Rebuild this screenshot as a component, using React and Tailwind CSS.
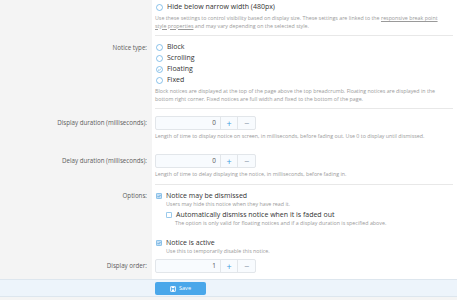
import React from "react";

const font = { fontFamily: '"Open Sans", "Noto Sans", sans-serif' };

function Radio({ checked }) {
  return (
    <svg width="7" height="7" viewBox="0 0 7 7" className="shrink-0">
      <circle cx="3.5" cy="3.5" r="3" fill="white" stroke="#5aa9e0" strokeWidth="0.7" />
      {checked && (
        <path d="M2 3.6 L3.1 4.6 L5 2.6" fill="none" stroke="#5aa9e0" strokeWidth="0.7" />
      )}
    </svg>
  );
}

function Check({ checked }) {
  return (
    <svg width="6" height="6" viewBox="0 0 6 6" className="shrink-0">
      <rect x="0.4" y="0.4" width="5.2" height="5.2" rx="0.8" fill={checked ? "#c6e0f5" : "white"} stroke="#5aa9e0" strokeWidth="0.7" />
      {checked && (
        <path d="M1.6 3.1 L2.6 4.1 L4.5 2" fill="none" stroke="#4a9bd6" strokeWidth="0.8" />
      )}
    </svg>
  );
}

function Label({ children }) {
  return (
    <div className="w-[152px] shrink-0 bg-[#f4f4f4] pr-[5px] text-right text-[6.2px] text-[#5c5c5c]">
      {children}
    </div>
  );
}

function NumberBox({ value }) {
  return (
    <div className="flex h-[14px] w-[101px] rounded-[2px] border border-[#e2e6ea] bg-[#f8fbfe]">
      <div className="flex flex-1 items-center justify-end pr-[4px] text-[6.4px] text-[#555]">{value}</div>
      <div className="flex w-[17px] items-center justify-center border-l border-[#e2e6ea] text-[9px] leading-none text-[#3d9de0]">+</div>
      <div className="flex w-[18px] items-center justify-center border-l border-[#e2e6ea] text-[9px] leading-none text-[#8c9bab]">−</div>
    </div>
  );
}

function Hint({ children, className = "" }) {
  return <div className={"text-[5.3px] leading-[7.5px] text-[#9a9a9a] " + className}>{children}</div>;
}

export default function App() {
  return (
    <div className="h-[300px] w-[457px] overflow-hidden bg-white" style={font}>
      {/* Row 1 */}
      <div className="flex">
        <Label />
        <div className="flex-1 pl-[3px] pr-[4px]">
          <div className="pt-[2px]">
            <div className="flex h-[11px] items-center gap-[4px] pl-[1px] text-[7px] text-[#333]">
              <Radio />
              <span>Hide below narrow width (480px)</span>
            </div>
            <Hint className="mt-[2px]">
              Use these settings to control visibility based on display size. These settings are linked to the{" "}
              <span className="underline">responsive break point</span>
              <br />
              <span className="underline">style properties</span> and may vary depending on the selected style.
            </Hint>
          </div>
          <div className="mt-[5px] h-px bg-[#e8e8e8]" />
        </div>
      </div>

      {/* Row 2 */}
      <div className="flex">
        <Label>
          <div className="pt-[6px] leading-[11px]">Notice type:</div>
        </Label>
        <div className="flex-1 pl-[3px] pr-[4px]">
          <div className="pt-[6px]">
            {["Block", "Scrolling", "Floating", "Fixed"].map((t) => (
              <div key={t} className="flex h-[11px] items-center gap-[4px] pl-[1px] text-[7px] text-[#333]">
                <Radio checked={t === "Floating"} />
                <span>{t}</span>
              </div>
            ))}
            <Hint className="mt-[1px] leading-[8px]">
              Block notices are displayed at the top of the page above the top breadcrumb. Floating notices are displayed in the
              <br />
              bottom right corner. Fixed notices are full width and fixed to the bottom of the page.
            </Hint>
          </div>
          <div className="mt-[5px] h-px bg-[#e8e8e8]" />
        </div>
      </div>

      {/* Row 3 */}
      <div className="flex">
        <Label>
          <div className="pt-[7px] leading-[14px]">Display duration (milliseconds):</div>
        </Label>
        <div className="flex-1 pb-[7px] pl-[3px] pr-[4px] pt-[7px]">
          <NumberBox value="0" />
          <Hint className="mt-[3px] leading-[7px]">
            Length of time to display notice on screen, in milliseconds, before fading out. Use 0 to display until dismissed.
          </Hint>
        </div>
      </div>

      {/* Row 4 */}
      <div className="flex">
        <Label>
          <div className="pt-[7px] leading-[14px]">Delay duration (milliseconds):</div>
        </Label>
        <div className="flex-1 pl-[3px] pr-[4px] pt-[7px]">
          <NumberBox value="0" />
          <Hint className="mt-[3px] leading-[7px]">
            Length of time to delay displaying the notice, in milliseconds, before fading in.
          </Hint>
          <div className="mt-[6px] h-px bg-[#e8e8e8]" />
        </div>
      </div>

      {/* Row 5 */}
      <div className="flex">
        <Label>
          <div className="pt-[6px] leading-[10px]">Options:</div>
        </Label>
        <div className="flex-1 pl-[3px] pr-[4px] pt-[6px]">
          <div className="flex h-[10px] items-center gap-[4px] pl-[1px] text-[7px] text-[#333]">
            <Check checked />
            <span>Notice may be dismissed</span>
          </div>
          <Hint className="pl-[11px] leading-[7px]">Users may hide this notice when they have read it.</Hint>
          <div className="ml-[11px] mt-[2px] flex h-[10px] items-center gap-[4px] text-[7px] text-[#333]">
            <Check />
            <span>Automatically dismiss notice when it is faded out</span>
          </div>
          <Hint className="pl-[20px] leading-[7px]">
            The option is only valid for floating notices and if a display duration is specified above.
          </Hint>
          <div className="mt-[11px] flex h-[10px] items-center gap-[4px] pl-[1px] text-[7px] text-[#333]">
            <Check checked />
            <span>Notice is active</span>
          </div>
          <Hint className="pl-[11px] leading-[7px]">Use this to temporarily disable this notice.</Hint>
        </div>
      </div>

      {/* Row 6 */}
      <div className="flex">
        <Label>
          <div className="pt-[4px] leading-[14px]">Display order:</div>
        </Label>
        <div className="flex-1 pb-[6px] pl-[3px] pr-[4px] pt-[4px]">
          <NumberBox value="1" />
        </div>
      </div>

      {/* Footer */}
      <div className="flex h-[18px] border-y border-[#dde6ee] bg-[#edf4fb]">
        <div className="w-[155px] shrink-0" />
        <div className="pt-[2px]">
          <div className="flex h-[13px] w-[51px] items-center justify-center gap-[3px] rounded-[2px] bg-[#4aa7ea] text-[5.6px] text-white">
            <svg width="6" height="6" viewBox="0 0 6 6">
              <rect x="0.5" y="0.5" width="5" height="5" rx="0.6" fill="none" stroke="white" strokeWidth="0.8" />
              <rect x="1.6" y="0.6" width="2.8" height="1.6" fill="white" />
              <rect x="1.8" y="3.4" width="2.4" height="2" fill="white" />
            </svg>
            <span>Save</span>
          </div>
        </div>
      </div>
      <div className="h-[4px] bg-[#f4f4f4]" />
    </div>
  );
}
